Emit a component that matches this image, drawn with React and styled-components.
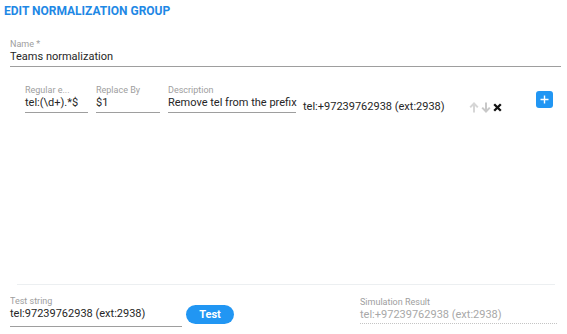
import React from "react";
import styled, { createGlobalStyle } from "styled-components";

const Global = createGlobalStyle`
  html, body { margin: 0; padding: 0; background: #fff; }
  body { font-family: Roboto, "Liberation Sans", sans-serif; color: #212121; }
  #root { width: 567px; height: 334px; }
`;

const Page = styled.div`
  width: 567px;
  height: 334px;
  display: flex;
  flex-direction: column;
  box-sizing: border-box;
  padding: 4px 6px 7px 4px;
`;

const Title = styled.h1`
  margin: 0;
  font-size: 12px;
  line-height: 15px;
  font-weight: 700;
  color: #1e88e5;
`;

const Field = styled.div`
  display: flex;
  flex-direction: column;
  width: ${(p) => p.$w || "auto"};
`;

const Label = styled.div`
  font-size: 9px;
  line-height: 11px;
  color: #9e9e9e;
  white-space: nowrap;
  overflow: hidden;
  text-overflow: ellipsis;
`;

const Value = styled.div`
  font-size: 11px;
  line-height: 14px;
  color: ${(p) => (p.$muted ? "#a8a8a8" : "#262626")};
  padding: 0 0 ${(p) => p.$pb || 2}px;
  border-bottom: 1px ${(p) => (p.$dotted ? "dotted" : "solid")} ${(p) => (p.$dotted ? "#c4c4c4" : "#9e9e9e")};
  white-space: nowrap;
`;

const NameWrap = styled.div`
  margin: 20px 0 0 6px;
`;

const RuleRow = styled.div`
  display: flex;
  align-items: flex-start;
  margin: 18px 0 0 21px;
`;

const Fields = styled.div`
  display: flex;
  gap: 8px;
`;

const Result = styled.div`
  font-size: 11px;
  line-height: 14px;
  color: #262626;
  margin: 15px 0 0 7px;
  width: 165px;
  white-space: nowrap;
`;

const Actions = styled.div`
  display: flex;
  align-items: center;
  gap: 1px;
  margin-top: 16px;
`;

const IconBtn = styled.span`
  display: inline-flex;
  width: 11px;
  height: 12px;
  align-items: center;
  justify-content: center;
`;

const AddBtn = styled.button`
  margin: 6px 8px 0 auto;
  width: 17px;
  height: 17px;
  border: none;
  border-radius: 3px;
  background: #2196f3;
  padding: 0;
  display: flex;
  align-items: center;
  justify-content: center;
`;

const Spacer = styled.div`
  flex: 1;
`;

const Divider = styled.div`
  height: 1px;
  background: #eceff1;
  margin: 0 6px 0 13px;
`;

const Bottom = styled.div`
  display: flex;
  align-items: flex-start;
  margin: 11px 0 0 6px;
`;

const TestBtn = styled.button`
  margin: 9px 0 0 4px;
  width: 48px;
  height: 19px;
  border: none;
  border-radius: 10px;
  background: #2196f3;
  color: #fff;
  font-family: Roboto, "Liberation Sans", sans-serif;
  font-weight: 700;
  font-size: 11px;
  padding: 0;
`;

const SimWrap = styled.div`
  margin: 1px 0 0 126px;
`;

const Up = ({ c }) => (
  <svg width="10" height="11" viewBox="0 0 10 11">
    <path d="M5 10.5V2M1.2 5.4L5 1.5l3.8 3.9" stroke={c} strokeWidth="2" fill="none" />
  </svg>
);
const Down = ({ c }) => (
  <svg width="10" height="11" viewBox="0 0 10 11">
    <path d="M5 0.5v8.5M1.2 5.6L5 9.5l3.8-3.9" stroke={c} strokeWidth="2" fill="none" />
  </svg>
);
const Cross = () => (
  <svg width="9" height="9" viewBox="0 0 9 9">
    <path d="M1.2 1.2l6.6 6.6M7.8 1.2L1.2 7.8" stroke="#111" strokeWidth="2.3" />
  </svg>
);
const Plus = () => (
  <svg width="9" height="9" viewBox="0 0 9 9">
    <path d="M4.5 0.5v8M0.5 4.5h8" stroke="#fff" strokeWidth="1.4" />
  </svg>
);

export default function App() {
  return (
    <>
      <Global />
      <Page>
        <Title>EDIT NORMALIZATION GROUP</Title>
        <NameWrap>
          <Field>
            <Label>Name *</Label>
            <Value>Teams normalization</Value>
          </Field>
        </NameWrap>
        <RuleRow>
          <Fields>
            <Field $w="63px">
              <Label>Regular e...</Label>
              <Value>tel:(\d+).*$</Value>
            </Field>
            <Field $w="64px">
              <Label>Replace By</Label>
              <Value>$1</Value>
            </Field>
            <Field $w="128px">
              <Label>Description</Label>
              <Value>Remove tel from the prefix</Value>
            </Field>
          </Fields>
          <Result>tel:+97239762938 (ext:2938)</Result>
          <Actions>
            <IconBtn><Up c="#d6d6d6" /></IconBtn>
            <IconBtn><Down c="#c8c8c8" /></IconBtn>
            <IconBtn><Cross /></IconBtn>
          </Actions>
          <Spacer />
          <AddBtn aria-label="add"><Plus /></AddBtn>
        </RuleRow>
        <Spacer />
        <Divider />
        <Bottom>
          <Field $w="172px">
            <Label>Test string</Label>
            <Value $pb={5}>tel:97239762938 (ext:2938)</Value>
          </Field>
          <TestBtn>Test</TestBtn>
          <SimWrap>
            <Field $w="197px">
              <Label>Simulation Result</Label>
              <Value $muted $dotted $pb={1}>tel:+97239762938 (ext:2938)</Value>
            </Field>
          </SimWrap>
        </Bottom>
      </Page>
    </>
  );
}
